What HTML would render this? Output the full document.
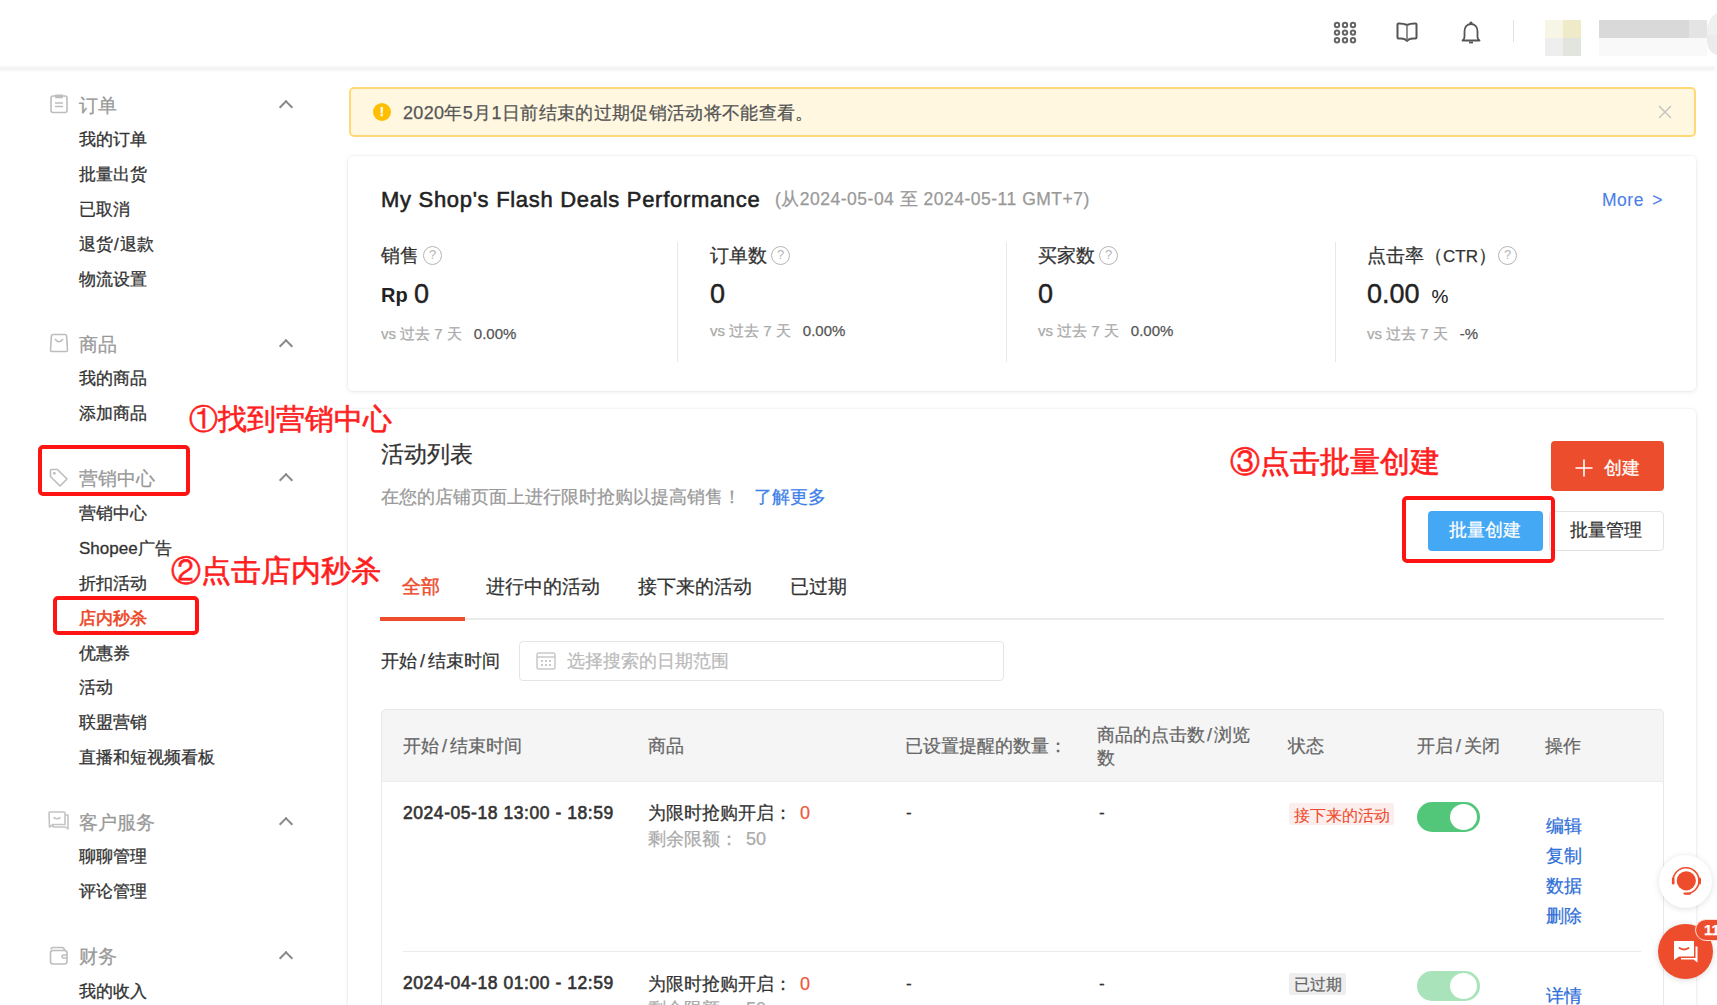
<!DOCTYPE html>
<html><head><meta charset="utf-8">
<style>
*{box-sizing:border-box;margin:0;padding:0}
html,body{width:1717px;height:1005px;overflow:hidden;background:#fff}
body{font-family:"Liberation Sans",sans-serif;color:#333;position:relative}
.a{position:absolute;white-space:nowrap;line-height:1;-webkit-text-stroke:0.25px currentColor}
.ns{-webkit-text-stroke:0 !important}
.hdr{position:absolute;left:0;top:0;width:1717px;height:67px;background:#fff}
.hsh{position:absolute;left:0;top:65px;width:1715px;height:8px;background:linear-gradient(#fff,#f1f1f1 45%,#f7f7f7 60%,#fff)}
.sb-h{font-size:19px;color:#999}
.sb-i{font-size:17px;color:#333;-webkit-text-stroke:0.3px currentColor}
.chev{position:absolute;width:10px;height:10px;margin-top:2px;border-left:2px solid #888;border-top:2px solid #888;transform:rotate(45deg)}
.card{position:absolute;background:#fff;border-radius:5px;box-shadow:0 0 0 1px rgba(0,0,0,0.025),0 1px 5px rgba(0,0,0,0.08)}
.red{color:#ff1e1e;-webkit-text-stroke:0.6px #ff1e1e}
.rbox{position:absolute;border:4px solid #ff1414;border-radius:5px}
.ic{position:absolute}
.lbl{font-size:18.5px;color:#333}
.q{position:absolute;width:19px;height:19px;border:1.5px solid #b5b5b5;border-radius:50%;font-size:13px;color:#b5b5b5;text-align:center;line-height:16px}
.big{font-size:27px;color:#222;-webkit-text-stroke:0.4px #222}
.vs{font-size:15px;color:#aaa}
.vs b{font-weight:normal;color:#555;font-size:15px;margin-left:12px}
.vline{position:absolute;width:1px;background:#e8e8e8;top:242px;height:120px}
.th{font-size:18px;color:#666}
.blue{color:#2f6fd8;font-size:18px !important;margin-top:1px}
</style></head><body>
<div class="hdr"></div><div class="hsh"></div>
<!-- header icons -->
<svg class="ic" style="left:1330px;top:19px" width="30" height="28" viewBox="0 0 30 28">
 <g fill="none" stroke="#666" stroke-width="2">
  <circle cx="7" cy="6" r="2.2"/><circle cx="15" cy="6" r="2.2"/><circle cx="23" cy="6" r="2.2"/>
  <circle cx="7" cy="13.6" r="2.2"/><circle cx="15" cy="13.6" r="2.2"/><circle cx="23" cy="13.6" r="2.2"/>
  <circle cx="7" cy="21.2" r="2.2"/><circle cx="15" cy="21.2" r="2.2"/><circle cx="23" cy="21.2" r="2.2"/>
 </g></svg>
<svg class="ic" style="left:1394px;top:20px" width="26" height="26" viewBox="0 0 26 26">
 <g fill="none" stroke="#555" stroke-width="2" stroke-linejoin="round">
  <path d="M13 5 Q10 3.5 5 3.5 L4.5 3.5 Q3.5 3.5 3.5 4.5 L3.5 17.5 Q3.5 18.5 4.5 18.5 L7 18.5 Q11 18.5 13 21 Q15 18.5 19 18.5 L21.5 18.5 Q22.5 18.5 22.5 17.5 L22.5 4.5 Q22.5 3.5 21.5 3.5 L21 3.5 Q16 3.5 13 5 Z"/>
  <path d="M13 5 L13 20.5" stroke="#777" stroke-width="1.6"/>
 </g></svg>
<svg class="ic" style="left:1459px;top:20px" width="24" height="26" viewBox="0 0 24 26">
 <g fill="none" stroke="#555" stroke-width="1.8" stroke-linejoin="round">
  <path d="M12 4 C7.5 4 5.5 7.5 5.5 11.5 L5.5 17 Q5.5 19 3.5 20.5 L20.5 20.5 Q18.5 19 18.5 17 L18.5 11.5 C18.5 7.5 16.5 4 12 4 Z"/>
  <path d="M10 22.5 L14 22.5"/>
 </g>
 <circle cx="12" cy="3.2" r="1.6" fill="#555"/>
</svg>
<div class="a" style="left:1513px;top:20px;width:1px;height:22px;background:#e0e0e0"></div>
<!-- pixelated avatar/name -->
<div class="a" style="left:1545px;top:20px;width:18px;height:18px;background:#f7f5e6"></div>
<div class="a" style="left:1563px;top:20px;width:18px;height:18px;background:#efebc8"></div>
<div class="a" style="left:1545px;top:38px;width:18px;height:18px;background:#eeeeee"></div>
<div class="a" style="left:1563px;top:38px;width:18px;height:18px;background:#e2e4de"></div>
<div class="a" style="left:1599px;top:20px;width:90px;height:18px;background:#d9d9d9"></div>
<div class="a" style="left:1689px;top:20px;width:18px;height:18px;background:#e4e4e4"></div>
<div class="a" style="left:1599px;top:38px;width:108px;height:18px;background:#f9f9f9"></div>
<div class="a" style="left:1707px;top:10px;width:20px;height:46px;border-radius:22px 0 0 16px;background:linear-gradient(#eff1ef 55%,#ebebeb 55%)"></div>

<!-- sidebar icons -->
<svg class="ic" style="left:48px;top:92px" width="22" height="22" viewBox="0 0 22 22">
 <g fill="none" stroke="#bdbdbd" stroke-width="1.6">
  <rect x="3" y="4" width="16" height="16.5" rx="2"/>
  <path d="M8 3.2 L14 3.2 L14 5.5 L8 5.5 Z" fill="#bdbdbd"/>
  <path d="M7 11 L15 11 M7 14.5 L15 14.5"/>
 </g></svg>
<svg class="ic" style="left:48px;top:332px" width="22" height="22" viewBox="0 0 22 22">
 <g fill="none" stroke="#bdbdbd" stroke-width="1.6">
  <path d="M5 2.5 L17 2.5 Q18.5 2.5 18.6 4 L19.5 18.5 Q19.5 19.5 18.5 19.5 L3.5 19.5 Q2.5 19.5 2.5 18.5 L3.4 4 Q3.5 2.5 5 2.5 Z"/>
  <path d="M7 7 Q11 12.5 15 7"/>
 </g></svg>
<svg class="ic" style="left:48px;top:467px" width="22" height="22" viewBox="0 0 22 22">
 <g fill="none" stroke="#bdbdbd" stroke-width="1.6" stroke-linejoin="round">
  <path d="M2.5 3.5 L2.5 9.5 L12 19 L19 12 L9.5 2.5 L3.5 2.5 Q2.5 2.5 2.5 3.5 Z"/>
 </g>
 <circle cx="6.3" cy="6.3" r="1.4" fill="#bdbdbd"/>
</svg>
<svg class="ic" style="left:47px;top:810px" width="24" height="22" viewBox="0 0 24 22">
 <g fill="none" stroke="#c4c4c4" stroke-width="1.6" stroke-linejoin="round">
  <path d="M2 3 Q2 2 3 2 L17 2 Q18 2 18 3 L18 14.5 L6 14.5 L2.5 17 Z"/>
  <path d="M18 5 L21 5 L21 19 L18.5 17 L6 17 L6 14.5"/>
  <path d="M6.5 7.5 Q10 10 13.5 7.5"/>
 </g></svg>
<svg class="ic" style="left:48px;top:945px" width="22" height="22" viewBox="0 0 22 22">
 <g fill="none" stroke="#bdbdbd" stroke-width="1.6" stroke-linejoin="round">
  <path d="M3 4.5 Q3 2.5 5 2.5 L14 2.5 Q16 2.5 16.5 5"/>
  <rect x="2.5" y="5.5" width="16.5" height="13.5" rx="2.5"/>
  <path d="M19 10 L15.5 10 Q14 10 14 11.5 Q14 13 15.5 13 L19 13"/>
 </g></svg>

<!-- chevrons -->
<div class="chev" style="left:281px;top:100px"></div>
<div class="chev" style="left:281px;top:339px"></div>
<div class="chev" style="left:281px;top:473px"></div>
<div class="chev" style="left:281px;top:817px"></div>
<div class="chev" style="left:281px;top:951px"></div>

<!-- sidebar -->
<div class="a sb-h" style="left:79px;top:96px">订单</div>
<div class="a sb-i" style="left:79px;top:131px">我的订单</div>
<div class="a sb-i" style="left:79px;top:166px">批量出货</div>
<div class="a sb-i" style="left:79px;top:201px">已取消</div>
<div class="a sb-i" style="left:79px;top:236px">退货<span style="margin:0 1px">/</span>退款</div>
<div class="a sb-i" style="left:79px;top:271px">物流设置</div>

<div class="a sb-h" style="left:79px;top:335px">商品</div>
<div class="a sb-i" style="left:79px;top:370px">我的商品</div>
<div class="a sb-i" style="left:79px;top:405px">添加商品</div>

<div class="a sb-h" style="left:79px;top:469px">营销中心</div>
<div class="a sb-i" style="left:79px;top:505px">营销中心</div>
<div class="a sb-i" style="left:79px;top:540px">Shopee广告</div>
<div class="a sb-i" style="left:79px;top:575px">折扣活动</div>
<div class="a sb-i" style="left:79px;top:610px;color:#ee4d2d;font-weight:bold;-webkit-text-stroke:0">店内秒杀</div>
<div class="a sb-i" style="left:79px;top:645px">优惠券</div>
<div class="a sb-i" style="left:79px;top:679px">活动</div>
<div class="a sb-i" style="left:79px;top:714px">联盟营销</div>
<div class="a sb-i" style="left:79px;top:749px">直播和短视频看板</div>

<div class="a sb-h" style="left:79px;top:813px">客户服务</div>
<div class="a sb-i" style="left:79px;top:848px">聊聊管理</div>
<div class="a sb-i" style="left:79px;top:883px">评论管理</div>

<div class="a sb-h" style="left:79px;top:947px">财务</div>
<div class="a sb-i" style="left:79px;top:983px">我的收入</div>

<!-- banner -->
<div style="position:absolute;left:349px;top:87px;width:1347px;height:50px;background:#fff7e0;border:2px solid #ffd975;border-radius:5px"></div>
<div class="a" style="left:373px;top:103px;width:18px;height:18px;border-radius:50%;background:#ffbf00;color:#fff;font-size:13px;font-weight:bold;text-align:center;line-height:18px">!</div>
<div class="a" style="left:403px;top:104px;font-size:18px;letter-spacing:0.35px;color:#555">2020年5月1日前结束的过期促销活动将不能查看。</div>
<svg class="ic" style="left:1658px;top:105px" width="14" height="14" viewBox="0 0 14 14"><path d="M1 1 L13 13 M13 1 L1 13" stroke="#c4c4c4" stroke-width="1.5"/></svg>

<!-- perf card -->
<div class="card" style="left:348px;top:156px;width:1348px;height:235px"></div>
<div class="a" style="left:381px;top:189px;font-size:22px;letter-spacing:0.7px;color:#222;-webkit-text-stroke:0.55px #222">My Shop's Flash Deals Performance</div>
<div class="a" style="left:775px;top:191px;font-size:17.5px;letter-spacing:0.5px;color:#999">(从2024-05-04 至 2024-05-11 GMT+7)</div>
<div class="a" style="left:1602px;top:192px;font-size:17.5px;letter-spacing:0.5px;word-spacing:3px;color:#4a7ee8;-webkit-text-stroke:0.1px currentColor">More &gt;</div>

<div class="vline" style="left:677px"></div>
<div class="vline" style="left:1006px"></div>
<div class="vline" style="left:1335px"></div>

<div class="a lbl" style="left:381px;top:247px">销售</div><div class="q" style="left:423px;top:246px">?</div>
<div class="a" style="left:381px;top:285px;font-size:20px;color:#222;font-weight:bold;-webkit-text-stroke:0">Rp</div>
<div class="a big" style="left:414px;top:281px">0</div>
<div class="a vs" style="left:381px;top:326px">vs 过去 7 天<b>0.00%</b></div>

<div class="a lbl" style="left:710px;top:247px">订单数</div><div class="q" style="left:771px;top:246px">?</div>
<div class="a big" style="left:710px;top:281px">0</div>
<div class="a vs" style="left:710px;top:323px">vs 过去 7 天<b>0.00%</b></div>

<div class="a lbl" style="left:1038px;top:247px">买家数</div><div class="q" style="left:1099px;top:246px">?</div>
<div class="a big" style="left:1038px;top:281px">0</div>
<div class="a vs" style="left:1038px;top:323px">vs 过去 7 天<b>0.00%</b></div>

<div class="a lbl" style="left:1367px;top:247px">点击率（<span style="font-size:17px">CTR</span>）</div><div class="q" style="left:1498px;top:246px">?</div>
<div class="a big" style="left:1367px;top:281px">0.00<span style="font-size:19px;margin-left:12px;-webkit-text-stroke:0.1px currentColor">%</span></div>
<div class="a vs" style="left:1367px;top:326px">vs 过去 7 天<b>-%</b></div>

<!-- list card -->
<div class="card" style="left:348px;top:409px;width:1348px;height:700px"></div>
<div class="a" style="left:381px;top:443px;font-size:23px;color:#333">活动列表</div>
<div class="a" style="left:381px;top:488px;font-size:18px;color:#999">在您的店铺页面上进行限时抢购以提高销售！</div><div class="a" style="left:754px;top:488px;font-size:18px;color:#3d7fe8">了解更多</div>

<div class="a" style="left:1551px;top:441px;width:113px;height:50px;background:#ec4e2d;border-radius:4px"></div>
<svg class="ic" style="left:1575px;top:459px" width="18" height="18" viewBox="0 0 18 18"><path d="M9 0.5 L9 17.5 M0.5 9 L17.5 9" stroke="#fff" stroke-width="1.6"/></svg>
<div class="a" style="left:1604px;top:459px;font-size:18px;color:#fff">创建</div>
<div class="a" style="left:1549px;top:511px;width:115px;height:40px;border:1px solid #e3e3e3;border-radius:4px;background:#fff"></div>
<div class="a" style="left:1570px;top:521px;font-size:18px;color:#333">批量管理</div>
<div class="a" style="left:1428px;top:511px;width:115px;height:40px;background:#45a8f4;border-radius:4px"></div>
<div class="a" style="left:1449px;top:521px;font-size:18px;color:#fff">批量创建</div>

<!-- tabs -->
<div class="a" style="left:381px;top:618px;width:1283px;height:2px;background:#ebebeb"></div>
<div class="a" style="left:380px;top:617px;width:85px;height:4px;background:#ee4d2d"></div>
<div class="a" style="left:402px;top:578px;font-size:18.5px;color:#ee4d2d;-webkit-text-stroke:0.5px currentColor">全部</div>
<div class="a" style="left:486px;top:578px;font-size:18.5px;color:#333">进行中的活动</div>
<div class="a" style="left:638px;top:578px;font-size:18.5px;color:#333">接下来的活动</div>
<div class="a" style="left:790px;top:578px;font-size:18.5px;color:#333">已过期</div>

<!-- filter -->
<div class="a" style="left:381px;top:652px;font-size:18px;color:#333">开始<span style="margin:0 3px">/</span>结束时间</div>
<div class="a" style="left:519px;top:641px;width:485px;height:40px;border:1px solid #e5e5e5;border-radius:4px"></div>
<svg class="ic" style="left:536px;top:651px" width="20" height="19" viewBox="0 0 20 19"><g fill="none" stroke="#c9c9c9" stroke-width="1.5"><rect x="1" y="2" width="18" height="16" rx="1.5"/><path d="M1 6 L19 6"/></g><g fill="#c9c9c9"><rect x="5" y="9" width="2" height="2"/><rect x="9" y="9" width="2" height="2"/><rect x="13" y="9" width="2" height="2"/><rect x="5" y="13" width="2" height="2"/><rect x="9" y="13" width="2" height="2"/><rect x="13" y="13" width="2" height="2"/></g></svg>
<div class="a" style="left:567px;top:652px;font-size:18px;color:#bbb">选择搜索的日期范围</div>

<!-- table -->
<div class="a" style="left:381px;top:709px;width:1283px;height:73px;background:#f5f5f5;border-radius:5px 5px 0 0"></div>
<div class="a" style="left:381px;top:709px;width:1283px;height:400px;border:1px solid #e9e9e9;border-radius:5px"></div>
<div class="a" style="left:382px;top:781px;width:1281px;height:1px;background:#ededed"></div>
<div class="a th" style="left:403px;top:737px">开始<span style="margin:0 3px">/</span>结束时间</div>
<div class="a th" style="left:648px;top:737px">商品</div>
<div class="a th" style="left:905px;top:737px">已设置提醒的数量：</div>
<div class="a th" style="left:1097px;top:724px;line-height:23.4px">商品的点击数<span style="margin:0 2px">/</span>浏览<br>数</div>
<div class="a th" style="left:1288px;top:737px">状态</div>
<div class="a th" style="left:1417px;top:737px">开启<span style="margin:0 3px">/</span>关闭</div>
<div class="a th" style="left:1545px;top:737px">操作</div>

<div class="a" style="left:403px;top:805px;font-size:17.5px;letter-spacing:0.55px;color:#333;-webkit-text-stroke:0.6px #333">2024-05-18 13:00 - 18:59</div>
<div class="a" style="left:648px;top:804px;font-size:18px;color:#333">为限时抢购开启：<span style="color:#f0583a;margin-left:8px">0</span></div>
<div class="a" style="left:648px;top:830px;font-size:18px;color:#aaa">剩余限额：<span style="margin-left:8px">50</span></div>
<div class="a" style="left:906px;top:804px;font-size:17px;color:#333">-</div>
<div class="a" style="left:1099px;top:804px;font-size:17px;color:#333">-</div>
<div class="a" style="left:1289px;top:803px;width:105px;height:22px;background:#fdeeee;border-radius:2px"></div>
<div class="a" style="left:1294px;top:808px;font-size:15.5px;color:#ee4d2d;-webkit-text-stroke:0.1px currentColor">接下来的活动</div>
<div class="a" style="left:1417px;top:802px;width:63px;height:30px;background:#52c77a;border-radius:15px"></div>
<div class="a" style="left:1450px;top:804px;width:27px;height:26px;background:#fff;border-radius:50%"></div>
<div class="a blue" style="left:1546px;top:816px;font-size:17px">编辑</div>
<div class="a blue" style="left:1546px;top:846px;font-size:17px">复制</div>
<div class="a blue" style="left:1546px;top:876px;font-size:17px">数据</div>
<div class="a blue" style="left:1546px;top:906px;font-size:17px">删除</div>

<div class="a" style="left:403px;top:951px;width:1238px;height:1px;background:#ebebeb"></div>

<div class="a" style="left:403px;top:975px;font-size:17.5px;letter-spacing:0.55px;color:#333;-webkit-text-stroke:0.6px #333">2024-04-18 01:00 - 12:59</div>
<div class="a" style="left:648px;top:975px;font-size:18px;color:#333">为限时抢购开启：<span style="color:#f0583a;margin-left:8px">0</span></div>
<div class="a" style="left:648px;top:1000px;font-size:18px;color:#aaa">剩余限额：<span style="margin-left:8px">50</span></div>
<div class="a" style="left:906px;top:975px;font-size:17px;color:#333">-</div>
<div class="a" style="left:1099px;top:975px;font-size:17px;color:#333">-</div>
<div class="a" style="left:1289px;top:973px;width:57px;height:22px;background:#eeeeee;border-radius:2px"></div>
<div class="a" style="left:1294px;top:977px;font-size:15.5px;color:#666">已过期</div>
<div class="a" style="left:1417px;top:971px;width:63px;height:30px;background:#a8e3b9;border-radius:15px"></div>
<div class="a" style="left:1450px;top:973px;width:27px;height:26px;background:#fff;border-radius:50%"></div>
<div class="a blue" style="left:1546px;top:986px;font-size:17px">详情</div>

<!-- floating -->
<div class="a" style="left:1659px;top:855px;width:53px;height:53px;border-radius:50%;background:#fff;box-shadow:0 1px 6px rgba(0,0,0,0.13)"></div>
<svg class="ic" style="left:1666px;top:861px" width="40" height="40" viewBox="0 0 40 40">
 <circle cx="20.3" cy="19.8" r="9.6" fill="#ee4d2d"/>
 <path d="M7 20 A13 13 0 1 1 20.3 32.8" fill="none" stroke="#ee4d2d" stroke-width="1.6"/>
 <rect x="5.9" y="16.5" width="2.6" height="7" rx="1.3" fill="#ee4d2d"/>
 <rect x="32" y="16.5" width="3" height="7" rx="1.5" fill="#ee4d2d"/>
 <path d="M18.5 32.6 L24 32.6" stroke="#ee4d2d" stroke-width="2.2" stroke-linecap="round"/>
</svg>
<div class="a" style="left:1658px;top:924px;width:55px;height:55px;border-radius:50%;background:#ee4d2d;box-shadow:0 1px 6px rgba(0,0,0,0.15)"></div>
<svg class="ic" style="left:1670px;top:937px" width="32" height="30" viewBox="0 0 32 30">
 <path d="M4 4.5 Q4 4 4.5 4 L23.5 4 Q24 4 24 4.5 L24 19.5 L9 19.5 L4 23 Z" fill="#fff"/>
 <path d="M25.5 9.5 L27.5 9.5 L27.5 25.5 L23.5 22.5 L11 22.5 L11 21 L25.5 21 Z" fill="#fff"/>
 <path d="M9.5 11 Q14 14 18.5 11" fill="none" stroke="#ee4d2d" stroke-width="1.8" stroke-linecap="round"/>
</svg>
<div class="a" style="left:1695px;top:919px;width:34px;height:22px;border-radius:11px;background:#ee4d2d;border:1.5px solid #fde0d8;color:#fff;font-size:15px;font-weight:bold;line-height:19px;padding-left:8px">11</div>

<!-- annotations -->
<div class="rbox" style="left:38px;top:445px;width:152px;height:51px"></div>
<div class="rbox" style="left:53px;top:596px;width:146px;height:39px"></div>
<div class="rbox" style="left:1402px;top:496px;width:153px;height:67px"></div>
<div class="a red" style="left:189px;top:405px;font-size:29px">①找到营销中心</div>
<div class="a red" style="left:171px;top:556px;font-size:30px">②点击店内秒杀</div>
<div class="a red" style="left:1230px;top:447px;font-size:30px">③点击批量创建</div>
</body></html>
